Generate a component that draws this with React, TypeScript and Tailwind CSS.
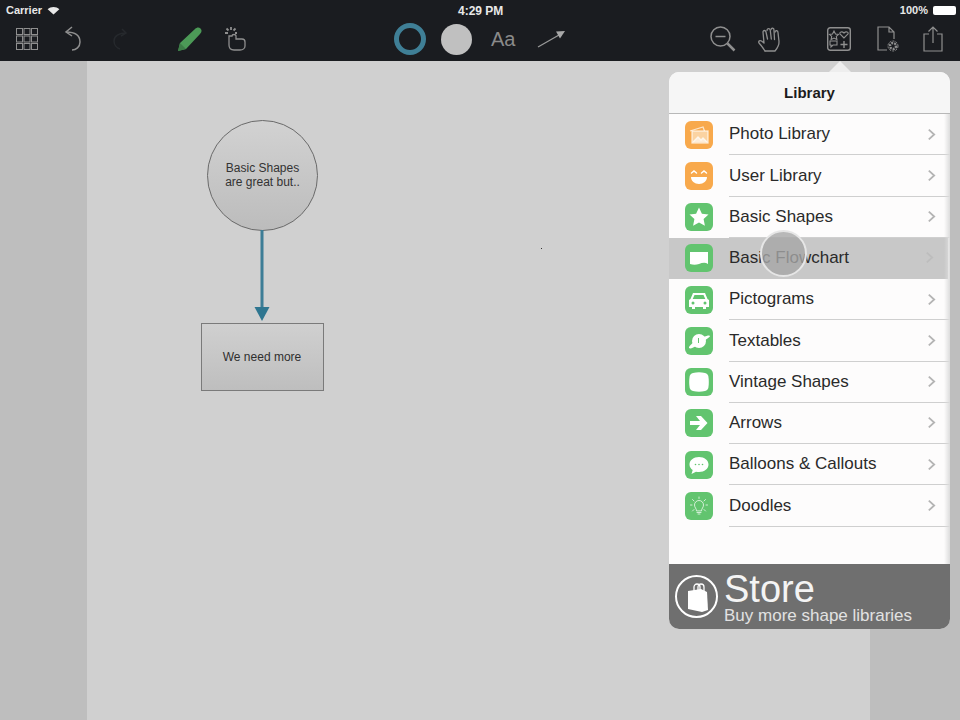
const rows = [
  { label: "Photo Library", color: "bg-[#f8a94c]", icon: "photo" },
  { label: "User Library", color: "bg-[#f8a94c]", icon: "smile" },
  { label: "Basic Shapes", color: "bg-[#62c46f]", icon: "star" },
  { label: "Basic Flowchart", color: "bg-[#62c46f]", icon: "flow", active: true },
  { label: "Pictograms", color: "bg-[#62c46f]", icon: "car" },
  { label: "Textables", color: "bg-[#62c46f]", icon: "planet" },
  { label: "Vintage Shapes", color: "bg-[#62c46f]", icon: "vintage" },
  { label: "Arrows", color: "bg-[#62c46f]", icon: "arrow" },
  { label: "Balloons & Callouts", color: "bg-[#62c46f]", icon: "balloon" },
  { label: "Doodles", color: "bg-[#62c46f]", icon: "bulb" },
];

const RowIcon = ({ name }: { name: string }) => {
  return (
    <svg viewBox="0 0 28 28" className="h-7 w-7">
      {name === "photo" && (
        <g stroke="#fff" strokeOpacity="0.7" fill="none" strokeWidth="1.3">
          <path d="M5 10l13-4 1.500 4" />
          <rect x="7" y="10" width="16" height="12" fill="#fbd3a2" />
          <path d="M8 21l5-5 3 3 2-2 4 4" fill="#fff" fillOpacity="0.6" />
        </g>
      )}
      {name === "smile" && (
        <g fill="none" stroke="#fff" strokeWidth="1.500" strokeLinecap="round">
          <path d="M6.500 11l2.500-2 2.500 2M16.500 11l2.500-2 2.500 2" />
          <path d="M6 15h16c0 4-3.500 7-8 7s-8-3-8-7z" fill="#fff" stroke="none" />
        </g>
      )}
      {name === "star" && <path d="M14 4.500l2.900 6.200 6.600.8-4.900 4.600 1.300 6.700-5.900-3.300-5.900 3.300 1.300-6.700-4.900-4.600 6.600-.8z" fill="#fff" />}
      {name === "flow" && <path d="M5 8h18v12c-3-2-6-1-9 0s-6 1-9 0z" fill="#fff" />}
      {name === "car" && (
        <path
          fillRule="evenodd"
          d="M8 7h12l2.500 6 1.500 1v7h-3v2h-3v-2H10v2H7v-2H4v-7l1.500-1zM9.500 9l-1.800 4h12.600l-1.800-4zM8 15.500a1.500 1.500 0 100 3 1.500 1.500 0 000-3zM20 15.500a1.500 1.500 0 100 3 1.500 1.500 0 000-3z"
          fill="#fff"
        />
      )}
      {name === "planet" && (
        <g fill="#fff">
          <circle cx="14" cy="14" r="7" />
          <path d="M4 21c-1-2 8-9 14-11 4-1.500 7-2 7-1s-2 2-4 3.500C15 17 6 23 4 21z" />
          <rect x="13" y="11" width="1" height="5" fill="#62c46f" />
        </g>
      )}
      {name === "vintage" && <path d="M8 5c4-1 8-1 12 0 2 .5 3 2 3.300 3 .7 4 .7 8 0 12-.3 1-1.300 2.500-3.300 3-4 1-8 1-12 0-2-.5-3-2-3.300-3-.7-4-.7-8 0-12C5 7 6 5.500 8 5z" fill="#fff" />}
      {name === "arrow" && <path d="M5 12h10l-4-5h5l6.500 7-6.500 7h-5l4-5H5z" fill="#fff" />}
      {name === "balloon" && (
        <g>
          <path d="M14 6c5.500 0 9.500 3.300 9.500 7.500S19.500 21 14 21c-1 0-2-.1-3-.3L6.500 23l1.200-4C5.700 17.700 4.500 15.800 4.500 13.500 4.500 9.300 8.500 6 14 6z" fill="#fff" />
          <circle cx="10.500" cy="13.500" r="0.800" fill="#62c46f" />
          <circle cx="14" cy="13.500" r="0.800" fill="#62c46f" />
          <circle cx="17.500" cy="13.500" r="0.800" fill="#62c46f" />
        </g>
      )}
      {name === "bulb" && (
        <g fill="none" stroke="#fff" strokeOpacity="0.8" strokeWidth="0.900" strokeLinecap="round">
          <path d="M11.500 18.500c0-2-2-3-2-5.500a4.500 4.500 0 019 0c0 2.500-2 3.500-2 5.500z" />
          <path d="M12 20.500h4M13 22h2" />
          <path d="M14 5v1.500M7.500 7.500L9 9M20.500 7.500L19 9M5.500 13H7M22.500 13H21M7.500 19L9 17.500M20.500 19L19 17.500" />
        </g>
      )}
    </svg>
  );
};

const LibraryPopover = () => {
  return (
    <div className="absolute left-[669px] top-[61px] w-[281px]">
      <div className="absolute left-[160px] top-0 h-0 w-0 border-x-[11px] border-b-[11px] border-x-transparent border-b-[#eeeeee]" />
      <div className="mt-[11px] flex h-[557px] flex-col overflow-hidden rounded-[10px] bg-[#fdfcfc]">
        <div className="flex h-[42px] items-center justify-center border-b border-[#b8b8b8] bg-[#f6f6f6] pt-[2px] text-[15px] font-bold text-[#1c1c1c]">
          Library
        </div>
        <div className="relative">
          {rows.map((row) => (
            <div
              key={row.label}
              className={`flex h-[41.25px] items-center pl-[16px] ${row.active ? "mr-[2px] bg-[#c8c8c8]" : ""}`}
            >
              <div className={`h-7 w-7 shrink-0 rounded-[6px] ${row.color}`}>
                <RowIcon name={row.icon} />
              </div>
              <div
                className={`ml-[16px] flex h-full flex-1 items-center border-b ${row.active ? "border-transparent" : "border-[#cfcfcf]"}`}
              >
                <span className="flex-1 text-[17px] text-[#2a2a2a]">{row.label}</span>
                <svg viewBox="0 0 10 14" className="mr-[14px] h-[13px] w-[9px]">
                  <path d="M2 1.500L8 7l-6 5.500" fill="none" stroke={row.active ? "#bdbdbd" : "#b4b4b4"} strokeWidth="2" />
                </svg>
              </div>
            </div>
          ))}
          <div className="pointer-events-none absolute right-0 top-0 h-[450px] w-[6px] bg-gradient-to-r from-transparent to-[#dcdcdc]" />
          {/* finger touch marker */}
          <div className="absolute left-[91px] top-[116px] h-[47px] w-[47px] rounded-full border-2 border-[#e6e6e6] bg-[#a6a6a6]/80" />
        </div>
        <div className="flex-1 bg-[#fdfcfc]" />
        <div className="flex h-[65px] items-center bg-[#6f6f6f] pl-[6px]">
          <div className="flex h-[43px] w-[43px] shrink-0 items-center justify-center rounded-full border-2 border-white">
            <svg viewBox="0 0 24 30" className="h-[30px] w-[24px]">
              <path d="M3 9l13-2 6 3 1 18-6 2-14-3z" fill="#fff" />
              <path d="M9 9V5a3 3 0 016 0v3M13 8V5a3 3 0 016 0v4" fill="none" stroke="#fff" strokeWidth="1.300" />
            </svg>
          </div>
          <div className="ml-[6px] flex flex-col pt-[3px] text-white">
            <span className="h-[36px] text-[38px] leading-[38px] text-[#f4f4f4]">Store</span>
            <span className="text-[17px] leading-[20px] text-[#e2e2e2]">Buy more shape libraries</span>
          </div>
        </div>
      </div>
    </div>
  );
};

const Toolbar = () => {
  return (
    <header className="h-[61px] shrink-0 bg-[#1a1c20]">
      <div className="relative flex h-[21px] items-center justify-between pl-[6px] pr-[4px] text-[11px] font-bold text-[#e8e8e8]">
        <div className="flex items-center gap-[5px]">
          <span>Carrier</span>
          <svg viewBox="0 0 14 10" className="h-[9px] w-[13px]">
            <path d="M7 9.500L.5 3.500C4 .3 10 .3 13.500 3.500z" fill="#e8e8e8" />
          </svg>
        </div>
        <span className="absolute left-[458px] text-[12px]">4:29 PM</span>
        <div className="flex items-center gap-[5px]">
          <span>100%</span>
          <div className="h-[9px] w-[23px] rounded-[2px] bg-white" />
        </div>
      </div>
      <div className="flex h-[36px] items-center text-[#8f8f8f]">
        <svg viewBox="0 0 22 22" className="ml-[16px] h-[22px] w-[22px]" fill="none" stroke="currentColor" strokeWidth="1">
          {[0.5, 8, 15.5].map((y) =>
            [0.5, 8, 15.5].map((x) => <rect key={`${x}-${y}`} x={x} y={y} width="6" height="6" />),
          )}
        </svg>
        <svg viewBox="0 0 18 26" className="ml-[26px] h-[26px] w-[18px]" fill="none" stroke="currentColor" strokeWidth="1.500">
          <path d="M8 1L2 6l6 4" />
          <path d="M2 6c8 0 14 3 14 10 0 5-4 8-8 8" />
        </svg>
        <svg viewBox="0 0 14 22" className="ml-[31px] h-[22px] w-[14px]" fill="none" stroke="#26292d" strokeWidth="1.500">
          <path d="M9 1l4 4-5 3" />
          <path d="M13 5C6 5 1 8 1 13c0 4 3 7 6 8" />
        </svg>
        <svg viewBox="0 0 26 26" className="ml-[50px] h-[26px] w-[26px]">
          <path d="M1 25l2-8L18 3c2-2 4-2 5.500-.5S25 6 23 8L9 23z" fill="#4c9a57" />
          <path d="M1 25l2-8 6 6z" fill="#3d7d47" />
        </svg>
        <svg viewBox="0 0 22 26" className="ml-[21px] h-[26px] w-[22px]" fill="none" stroke="currentColor" strokeWidth="1.300">
          <path d="M5 10v9c0 3 2 5 5 5h6c3 0 5-2 5-4v-4c0-2-1-3-3-3h-6V10c0-2-4-2-4 0z" />
          <path d="M7 1v3M1 7h3M2.500 2.500l2 2M11.500 2.500l-2 2M13 7h-2" strokeWidth="1.800" />
        </svg>
        <div className="ml-[148px] h-[32px] w-[32px] rounded-full border-[5px] border-[#3f7f96]" />
        <div className="ml-[15px] h-[31px] w-[31px] rounded-full bg-[#c0c0c0]" />
        <span className="ml-[19px] w-[25px] text-[20px] leading-none text-[#8a8a8a]">Aa</span>
        <svg viewBox="0 0 28 18" className="ml-[21px] h-[18px] w-[28px]">
          <path d="M1 17L22 5" stroke="#9a9a9a" strokeWidth="1.300" />
          <path d="M28 1l-9 .5 4 7z" fill="#a8a8a8" />
        </svg>
        <svg viewBox="0 0 26 26" className="ml-[145px] h-[26px] w-[26px]" fill="none" stroke="currentColor" strokeWidth="1.500">
          <circle cx="10.500" cy="10.500" r="9.500" />
          <path d="M5.500 10.500h10" />
          <path d="M17.500 17.500L24.500 24.500" strokeWidth="2.500" />
        </svg>
        <svg viewBox="0 0 23 25" className="ml-[22px] h-[25px] w-[23px]" fill="none" stroke="currentColor" strokeWidth="1.300" strokeLinecap="round" strokeLinejoin="round">
          <path d="M7 24c-2-3-4-6-6-8-1-2 1-3 2.500-2L6 16 5 5c0-2 2.500-2 3 0l1.500 7" />
          <path d="M9 3.500c0-2.500 3-2.500 3.300 0l1 8.500" />
          <path d="M13 2.500c.5-2 3-1.500 3 .5l.5 9.500" />
          <path d="M17 5c.5-2 3-1.500 3 .5l1 9c.3 4-1.500 6.500-4 9.500H7" />
        </svg>
        <svg viewBox="0 0 24 24" className="ml-[46px] h-[24px] w-[24px]" fill="none" stroke="currentColor" strokeWidth="1.100">
          <rect x="0.700" y="0.700" width="22.600" height="22.600" rx="2.500" strokeWidth="1.400" />
          <path d="M7 4l1.500 3 3 .4-2.200 2 .6 3L7 11l-2.900 1.400.6-3-2.200-2 3-.4z" />
          <path d="M17 11l-4-4c-1-2 2-3 4-1 2-2 5-1 4 1z" />
          <path d="M3 14h7v4H6l-2 2v-2H3z" />
          <path d="M17 14v7M13.500 17.500h7" strokeWidth="1.400" />
        </svg>
        <svg viewBox="0 0 22 26" className="ml-[26px] h-[26px] w-[22px]" fill="none" stroke="currentColor" strokeWidth="1.200">
          <path d="M10 24H1V1h11l5 5v7M12 1v5h5" />
          <circle cx="16" cy="20" r="3" strokeWidth="2.400" strokeDasharray="2 1" />
          <circle cx="16" cy="20" r="5" strokeWidth="1" strokeDasharray="2 1.200" />
        </svg>
        <svg viewBox="0 0 20 26" className="ml-[24px] h-[26px] w-[20px]" fill="none" stroke="currentColor" strokeWidth="1.200">
          <path d="M6 8H1v17h18V8h-5M10 17V1M5.500 5.500L10 1l4.500 4.500" />
        </svg>
      </div>
    </header>
  );
};

const Canvas = () => {
  return (
    <div className="relative flex-1 bg-[#d0d0d0]">
      <div className="absolute left-[120px] top-[59px] flex h-[111px] w-[111px] flex-col items-center justify-center rounded-full border border-[#6a6a6a] bg-gradient-to-b from-[#d2d2d2] to-[#bcbcbc] pb-[2px] text-center text-[12px] leading-[14px] text-[#333333]">
        <span>Basic Shapes</span>
        <span>are great but..</span>
      </div>
      <svg viewBox="0 0 20 92" className="absolute left-[165px] top-[169px] h-[92px] w-[20px]">
        <path d="M10 0v78" stroke="#3d7d96" strokeWidth="3" />
        <path d="M2.500 77h15L10 91z" fill="#2f7690" />
      </svg>
      <div className="absolute left-[114px] top-[262px] flex h-[68px] w-[123px] items-center justify-center border border-[#7a7a7a] bg-gradient-to-b from-[#d0d0d0] to-[#bebebe] pr-[1px] text-[12px] text-[#2f2f2f]">
        We need more
      </div>
      <div className="absolute left-[454px] top-[187px] h-px w-px bg-[#333333]" />
    </div>
  );
};

export default function App() {
  return (
    <div className="relative flex h-[720px] w-[960px] flex-col overflow-hidden font-['Liberation_Sans',sans-serif]">
      <Toolbar />
      <main className="flex flex-1 bg-[#bebebe]">
        <div className="w-[87px] shrink-0" />
        <Canvas />
        <div className="w-[90px] shrink-0" />
      </main>
      <LibraryPopover />
    </div>
  );
}
